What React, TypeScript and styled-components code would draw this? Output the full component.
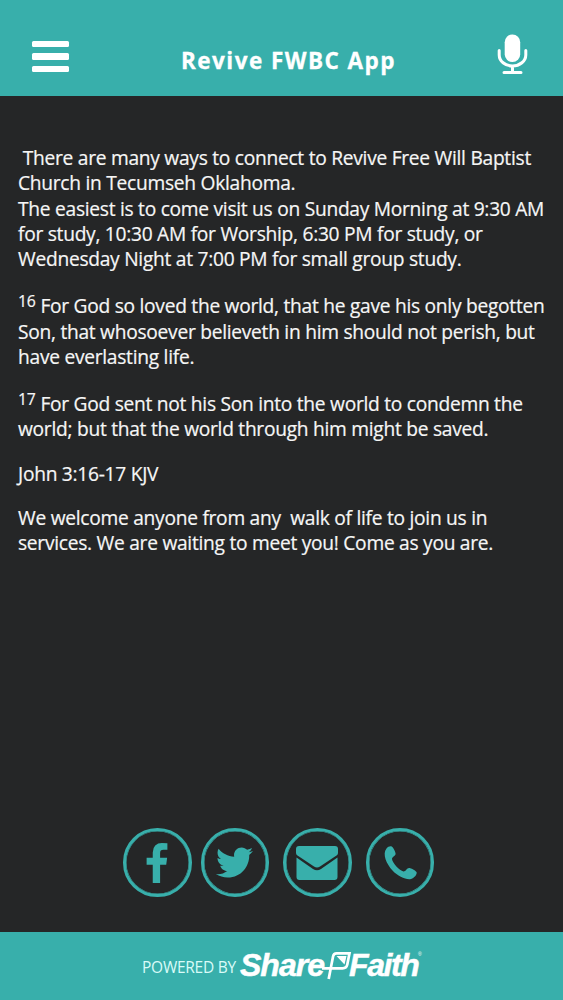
import React from 'react';
import styled, { createGlobalStyle } from 'styled-components';
import { FaTwitter } from 'react-icons/fa';

const teal = '#38afab';
const dark = '#252627';

const GlobalStyle = createGlobalStyle`
  * { box-sizing: border-box; }
  body { margin: 0; background: ${dark}; font-family: 'Open Sans', sans-serif; }
`;

const Screen = styled.div`
  display: flex;
  flex-direction: column;
  height: 1000px;
  width: 563px;
  background: ${dark};
  color: #f6f6f6;
  overflow: hidden;
`;

const Header = styled.header`
  display: flex;
  align-items: flex-start;
  justify-content: space-between;
  flex: none;
  height: 96px;
  padding: 34px 36px 0 32px;
  background: ${teal};
  color: #fff;
`;

const MenuButton = styled.button`
  display: flex;
  flex-direction: column;
  gap: 6px;
  width: 37px;
  margin-top: 7px;
  padding: 0;
  border: 0;
  background: none;
`;

const MenuBar = styled.span`
  height: 6.3px;
  border-radius: 1.5px;
  background: #fff;
`;

const Title = styled.h1`
  margin: 11px 0 0 10px;
  font-size: 22.5px;
  line-height: 31px;
  font-weight: 700;
  letter-spacing: 1.45px;
  white-space: nowrap;
  -webkit-text-stroke: 0.3px #fff;
`;

const Icon = styled.svg`
  display: block;
  flex: none;
  overflow: visible;
`;

const Content = styled.main`
  flex: 1;
  padding: 49px 0 0 18px;
  font-size: 19.2px;
  letter-spacing: -0.275px;
  line-height: 25.25px;
  white-space: pre;
  -webkit-text-stroke: 0.2px #f6f6f6;
`;

const Paragraph = styled.p<{ $gap: number }>`
  margin: 0 0 ${({ $gap }) => $gap}px;
`;

const Verse = styled.sup`
  font-size: 15.8px;
  letter-spacing: -0.2px;
  line-height: 0;
  vertical-align: 6px;
`;

const Social = styled.nav`
  display: flex;
  justify-content: flex-start;
  gap: 9px;
  flex: none;
  padding: 0 0 35px 123px;
`;

const Circle = styled.a<{ $before?: number }>`
  display: flex;
  align-items: center;
  justify-content: center;
  width: 68.6px;
  height: 68.6px;
  margin-left: ${({ $before = 0 }) => $before}px;
  border: 3px solid ${teal};
  box-shadow: inset 0 0 0 0.5px ${teal};
  border-radius: 50%;
  color: ${teal};
`;

const Footer = styled.footer`
  display: flex;
  align-items: flex-start;
  flex: none;
  height: 68px;
  padding: 16px 0 0 142px;
  background: ${teal};
  color: #fff;
`;

const Powered = styled.span`
  width: 98px;
  padding-top: 9px;
  font-size: 15.5px;
  letter-spacing: -0.25px;
  line-height: 20px;
  white-space: nowrap;
  color: #d9fbf8;
`;

const Logo = styled.span`
  display: flex;
  align-items: flex-start;
  font: italic 700 32px/34px 'Liberation Sans', sans-serif;
  -webkit-text-stroke: 0.5px #fff;
`;

const Word = styled.span<{ $width: number; $spacing: number }>`
  width: ${({ $width }) => $width}px;
  letter-spacing: ${({ $spacing }) => $spacing}px;
  white-space: nowrap;
`;

const Registered = styled.span`
  margin-top: 4px;
  font: 5px/5px 'Liberation Sans', sans-serif;
  -webkit-text-stroke: 0;
`;

export default function App() {
  return (
    <Screen>
      <GlobalStyle />
      <Header>
        <MenuButton aria-label="Menu">
          <MenuBar />
          <MenuBar />
          <MenuBar />
        </MenuButton>
        <Title>Revive FWBC App</Title>
        <Icon width="29" height="41" viewBox="0 0 29 41">
          <rect x="6.700" y="0.5" width="15.500" height="27.5" rx="7.7" fill="#fff" />
          <path d="M0.700 16.500v4.500a13.300 11 0 0 0 26.600 0v-4.500M14 32v6M5.500 38.500h17" transform="translate(0.500 0)" fill="none" stroke="#fff" strokeWidth="3" strokeLinecap="round" />
        </Icon>
      </Header>
      <Content>
        <Paragraph $gap={22}>
          {' There are many ways to connect to Revive Free Will Baptist\nChurch in Tecumseh Oklahoma.\nThe easiest is to come visit us on Sunday Morning at 9:30 AM\nfor study, 10:30 AM for Worship, 6:30 PM for study, or\nWednesday Night at 7:00 PM for small group study.'}
        </Paragraph>
        <Paragraph $gap={22}>
          <Verse>16</Verse>
          {' For God so loved the world, that he gave his only begotten\nSon, that whosoever believeth in him should not perish, but\nhave everlasting life.'}
        </Paragraph>
        <Paragraph $gap={19}>
          <Verse>17</Verse>
          {' For God sent not his Son into the world to condemn the\nworld; but that the world through him might be saved.'}
        </Paragraph>
        <Paragraph $gap={19}>John 3:16-17 KJV</Paragraph>
        <Paragraph $gap={0}>
          {'We welcome anyone from any  walk of life to join us in\nservices. We are waiting to meet you! Come as you are.'}
        </Paragraph>
      </Content>
      <Social>
        <Circle>
          <Icon width="22" height="40" viewBox="479 0 864 1664" fill="currentColor">
            <path d="M1343 12v264h-157q-86 0-116 36t-30 108v189h293l-39 296h-254v759h-306v-759h-255v-296h255v-218q0-186 104-288.500t277-102.500q147 0 228 12z" />
          </Icon>
        </Circle>
        <Circle>
          <FaTwitter size={37} />
        </Circle>
        <Circle $before={5}>
          <Icon width="42" height="34" viewBox="0 0 42 34" fill="currentColor">
            <path d="M3 0H39Q42 0 42 3V7Q42 8.500 40.500 9.500L24 20.500Q21 22.500 18 20.500L1.500 9.500Q0 8.500 0 7V3Q0 0 3 0Z" />
            <path d="M0.500 11.500L17 22.900Q21 25.500 25 22.900L41.500 11.500V31Q41.500 34 38.500 34H3.500Q0.500 34 0.500 31Z" />
          </Icon>
        </Circle>
        <Circle $before={5}>
          <Icon width="33" height="34" viewBox="0 0 33 34" fill="currentColor">
            <path d="M2.500 2.500C4 .5 6.500-.2 8 .7C9.500 1.700 11.500 6 11.600 7.800C11.700 9.800 8 11 8 13C8.500 17 15.500 24.500 19.500 25.500C21.500 25.700 23 22 25 22C27 22 31.500 24.500 32.500 26C33.500 28 30.500 32 27 33C22 34 14 30.500 8.500 24.500C2.500 18-2 8 2.500 2.500Z" />
          </Icon>
        </Circle>
      </Social>
      <Footer>
        <Powered>POWERED BY</Powered>
        <Logo>
          <Word $width={84} $spacing={-1}>Share</Word>
          <Icon width="25" height="32" viewBox="0 0 25 32">
            <path d="M-2 20.300H18.500Q22.500 20.300 23.300 16.500L25.500 5.300H12.500Q9.700 5.300 9.100 8.300L7 19L4.700 31" fill="none" stroke="#fff" strokeWidth="2.700" />
            <path d="M12.500 8H22.500L20.500 16.500Z" fill="#fff" />
          </Icon>
          <Word $width={69} $spacing={-1.4}>Faith</Word>
          <Registered>®</Registered>
        </Logo>
      </Footer>
    </Screen>
  );
}
